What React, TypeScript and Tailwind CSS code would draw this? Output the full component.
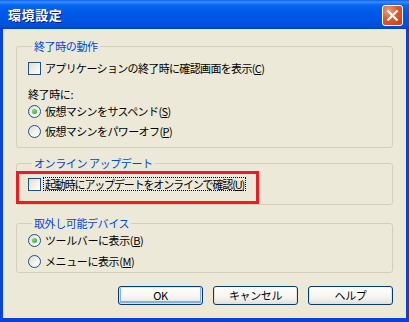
import { X } from "lucide-react";

const font = { fontFamily: '"Noto Sans CJK JP", "Noto Sans", sans-serif' };

const CheckBox = () => (
  <span className="w-[13px] h-[13px] shrink-0 border border-[#1C5180] bg-[linear-gradient(135deg,#DCDCD7_0%,#F0F0EA_50%,#FFFFFF_100%)]" />
);

const Radio = ({ checked }: { checked?: boolean }) => (
  <span className="w-[13px] h-[13px] shrink-0 rounded-full border border-[#1C5180] bg-[linear-gradient(135deg,#DCDCD7_0%,#F4F4EF_55%,#FFFFFF_100%)] flex items-center justify-center">
    {checked && <span className="w-[5px] h-[5px] rounded-full bg-[radial-gradient(circle_at_35%_35%,#7BE07B,#21A121)]" />}
  </span>
);

const Key = ({ k }: { k: string }) => (
  <>
    (<span className="underline underline-offset-[1px]">{k}</span>)
  </>
);

const Group = ({ title, className, children }: { title: string; className?: string; children: React.ReactNode }) => (
  <fieldset className={"border border-[#D0D0BF] rounded-[3px] pl-[11px] " + (className ?? "")}>
    <legend className="ml-[4px] px-[2px] h-[14px] leading-[14px] text-[#0046D5]">{title}</legend>
    {children}
  </fieldset>
);

const Button = ({ label, isDefault }: { label: string; isDefault?: boolean }) => (
  <button
    className={
      "w-[85px] h-[19px] rounded-[3px] border border-[#003C74] bg-[linear-gradient(to_bottom,#FFFFFF_0%,#F5F4EF_60%,#E3E2DA_100%)] text-black leading-[15px] " +
      (isDefault ? "shadow-[inset_0_0_0_1px_#CEE7FF,inset_0_-1px_0_2px_#89ADE4]" : "shadow-[inset_0_-1px_0_1px_#E6E3D6]")
    }
  >
    {label}
  </button>
);

export default function App() {
  return (
    <div className="relative w-[409px] h-[322px] bg-[#0842D6] flex flex-col text-[11px] tracking-[-0.4px] text-black" style={font}>
      {/* title bar */}
      <div className="h-[29px] flex items-center justify-between pl-[8px] pr-[6px] bg-[linear-gradient(to_bottom,#0A60E9_0%,#3B8DFE_7%,#0666F3_17%,#0058E6_45%,#0054E3_75%,#0050DD_90%,#003DC8_100%)]">
        <span className="text-white font-bold text-[13px] tracking-[0.6px] [text-shadow:1px_1px_0_#0A1883]">環境設定</span>
        <span className="w-[21px] h-[21px] mt-[1px] rounded-[3px] border border-white bg-[radial-gradient(circle_at_30%_25%,#F59A7A_0%,#E2582B_45%,#C2400E_100%)] flex items-center justify-center">
          <X size={17} strokeWidth={3.2} color="#fff" strokeLinecap="square" />
        </span>
      </div>

      {/* client area */}
      <div className="flex-1 mx-[3px] mb-[4px] bg-[#ECE9D8] px-[13px] pt-[10px] flex flex-col">
        <Group title="終了時の動作" className="pb-[8px]">
          <div className="mt-[7px] h-[16px] flex items-center gap-[2px]">
            <CheckBox />
            <span className="pl-[2px] tracking-[-0.65px]">アプリケーションの終了時に確認画面を表示<Key k="C" /></span>
          </div>
          <div className="mt-[10px] h-[16px] flex items-center">終了時に:</div>
          <div className="mt-[1px] h-[16px] flex items-center gap-[2px]">
            <Radio checked />
            <span className="pl-[2px] tracking-[-0.6px]">仮想マシンをサスペンド<Key k="S" /></span>
          </div>
          <div className="mt-[4px] h-[16px] flex items-center gap-[2px]">
            <Radio />
            <span className="pl-[2px] tracking-[-0.6px]">仮想マシンをパワーオフ<Key k="P" /></span>
          </div>
        </Group>

        <Group title="オンライン アップデート" className="mt-[8px] pb-[12px]">
          <div className="mt-[6px] h-[16px] flex items-center gap-[1px]">
            <CheckBox />
            <span className="ml-[1px] px-[1px] h-[14px] leading-[13px] border border-dotted border-black tracking-[-1.15px]">
              起動時にアップデートをオンラインで確認<Key k="U" />
            </span>
          </div>
        </Group>

        <Group title="取外し可能デバイス" className="mt-[11px] pb-[3px]">
          <div className="mt-[2px] h-[16px] flex items-center gap-[2px]">
            <Radio checked />
            <span className="pl-[2px]">ツールバーに表示<Key k="B" /></span>
          </div>
          <div className="mt-[5px] h-[16px] flex items-center gap-[2px]">
            <Radio />
            <span className="pl-[2px]">メニューに表示<Key k="M" /></span>
          </div>
        </Group>

        <div className="mt-[13px] flex justify-end gap-[10px]">
          <Button label="OK" isDefault />
          <Button label="キャンセル" />
          <Button label="ヘルプ" />
        </div>
      </div>

      {/* red highlight annotation */}
      <div className="absolute left-[16px] top-[171px] w-[243px] h-[33px] border-[3px] border-[#ED1C24]" />
    </div>
  );
}
